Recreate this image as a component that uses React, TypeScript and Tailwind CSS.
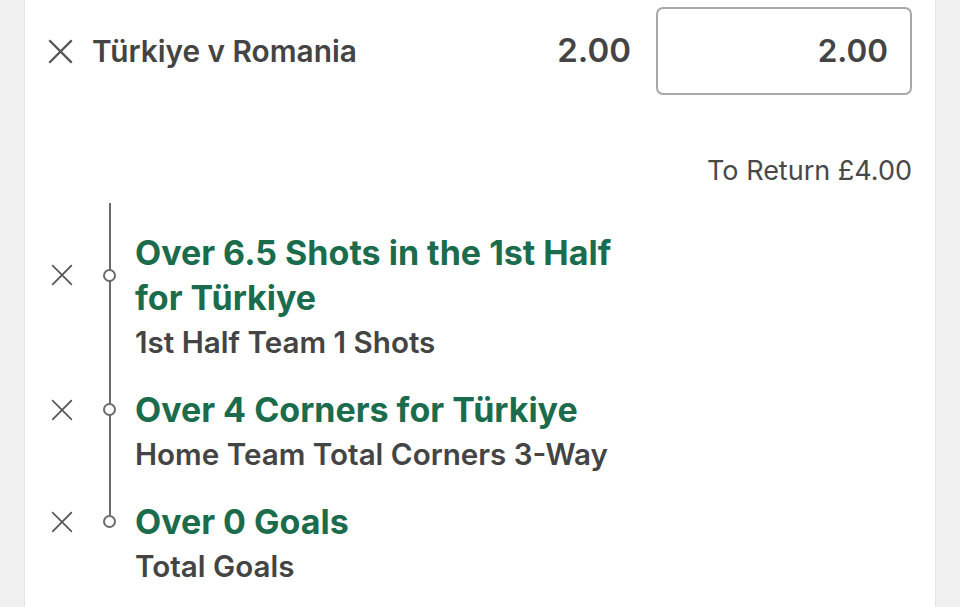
function Cross({ size, stroke }: { size: number; stroke: number }) {
  return (
    <svg width={size} height={size} viewBox="0 0 24 24" className="shrink-0">
      <path d="M2 2L22 22M22 2L2 22" stroke="#555" strokeWidth={stroke} strokeLinecap="square" fill="none" />
    </svg>
  );
}

const legs = [
  { title: "Over 6.5 Shots in the 1st Half for Türkiye", market: "1st Half Team 1 Shots" },
  { title: "Over 4 Corners for Türkiye", market: "Home Team Total Corners 3-Way" },
  { title: "Over 0 Goals", market: "Total Goals" },
];

export default function App() {
  return (
    <div
      className="flex h-[607px] w-[960px] overflow-hidden bg-[#f0f0f0]"
      style={{ fontFamily: "Inter, 'Liberation Sans', sans-serif" }}
    >
      <div className="ml-[24px] flex w-[912px] flex-col border-x border-[#e4e4e4] bg-white">
        <div className="flex items-center pt-[7px] pr-[23px]">
          <div className="ml-[23px] mr-[19px]">
            <Cross size={25} stroke={2.2} />
          </div>
          <div className="flex-1 text-[29.8px] font-semibold text-[#444]">Türkiye v Romania</div>
          <div className="mr-[25px] text-[33px] font-semibold text-[#444]">2.00</div>
          <div className="flex h-[88px] w-[256px] items-center justify-end rounded-[7px] border-2 border-[#a8a8a8] pr-[22px] text-[31.5px] font-semibold text-[#444]">
            2.00
          </div>
        </div>

        <div className="mt-[61px] pr-[23px] text-right text-[27px] leading-[30px] text-[#484848]">To Return £4.00</div>

        <div className="relative mt-[17px] flex flex-col gap-[23px] pt-[27px]">
          <div className="absolute top-0 left-[84px] h-[312px] w-[2px] bg-[#6a6a6a]" />
          {legs.map((leg) => (
            <div key={leg.title} className="flex flex-col">
              <div className="flex items-center">
                <div className="ml-[26px] mr-[30px]">
                  <Cross size={22} stroke={1.9} />
                </div>
                <div className="relative z-10 h-[13px] w-[13px] shrink-0 rounded-full border-2 border-[#6a6a6a] bg-white" />
                <div className="ml-[19px] max-w-[520px] text-[34px] font-bold leading-[45px] text-[#1a6c4c]">
                  {leg.title}
                </div>
              </div>
              <div className="pl-[110px] text-[29.6px] font-semibold leading-[44px] text-[#444]">{leg.market}</div>
            </div>
          ))}
        </div>
      </div>
    </div>
  );
}
